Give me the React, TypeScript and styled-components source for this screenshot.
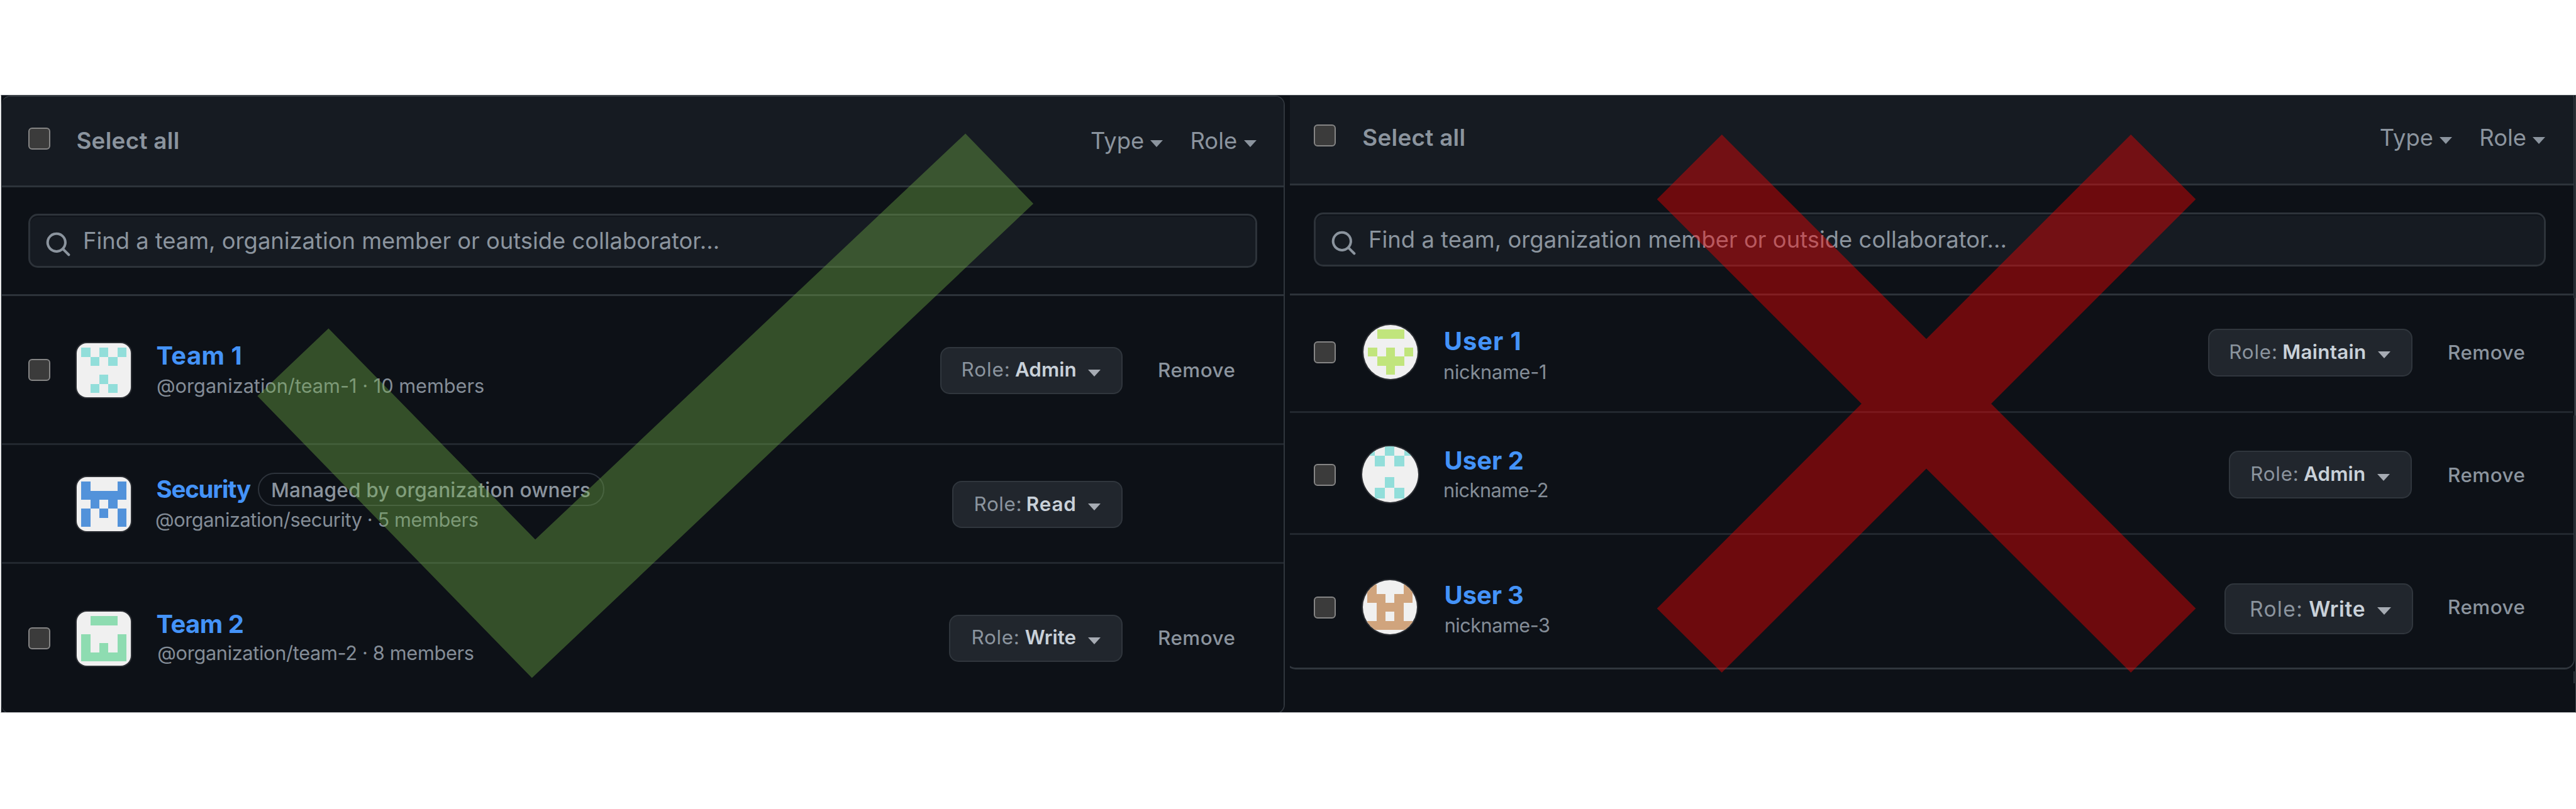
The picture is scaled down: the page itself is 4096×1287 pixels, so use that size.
import React from 'react';
import styled, { createGlobalStyle } from 'styled-components';

const canvas = '#0d1117';
const subtle = '#161b22';
const line = '#2d333a';
const rowLine = '#22282f';
const muted = '#8b949e';

const Global = createGlobalStyle`
  * { box-sizing: border-box; }
  body { margin: 0; background: #fff; font-family: Inter, "Liberation Sans", sans-serif; color: ${muted}; }
`;

const Page = styled.main`
  position: relative;
  width: 4096px;
  height: 1287px;
  padding: 151px 0 0 1px;
  overflow: hidden;
  background: #fff;
`;

const Board = styled.div`
  position: relative;
  display: flex;
  gap: 8px;
  height: 983px;
  overflow: hidden;
  background: ${canvas};
  border: 1px solid;
  border-color: #4c5259 #45494e #b4b6b8 #c4c6c8;
`;

const LeftPanel = styled.section`
  flex: none;
  width: 2041px;
  height: 984px;
  overflow: hidden;
  border: solid #30363d;
  border-width: 2px 2px 2px 1px;
  border-left-color: #1f252c;
  border-radius: 15px;
`;

const RightSide = styled.div`
  position: relative;
  flex: 1;
  overflow: hidden;
`;

const RightPanel = styled.section`
  width: 2050px;
  margin: -10px 0 0 -7px;
  overflow: hidden;
  border: solid #30363d;
  border-width: 2px 2px 3px 2px;
  border-radius: 16px;
`;

/* Short vertical strips where the outer border steps sideways. */
const Sliver = styled.i<{ $top: number; $height: number; $left: number; $fill?: boolean }>`
  position: absolute;
  top: ${p => p.$top}px;
  left: ${p => p.$left}px;
  width: ${p => (p.$fill ? 4 : 2)}px;
  height: ${p => p.$height}px;
  background: ${p => (p.$fill ? canvas : '#30363d')};
  border-right: ${p => (p.$fill ? '2px solid #30363d' : '0')};
`;

const Header = styled.header<{ $height: number; $top: number; $left: number; $right: number }>`
  display: flex;
  align-items: flex-start;
  height: ${p => p.$height}px;
  padding: ${p => p.$top}px ${p => p.$right}px 0 ${p => p.$left}px;
  background: ${subtle};
  border-bottom: 3px solid ${line};
`;

const Check = styled.span<{ $top?: number }>`
  flex: none;
  width: 35px;
  height: 35px;
  margin-top: ${p => p.$top ?? 0}px;
  border: 2px solid #858585;
  border-radius: 6px;
  background: #3b3b3b;
`;

const SelectAll = styled.span<{ $left: number }>`
  flex: 1;
  margin: 3.4px 0 0 ${p => p.$left}px;
  font-size: 36.8px;
  font-weight: 600;
  line-height: 1;
  letter-spacing: 0.3px;
`;

const Menu = styled.span<{ $gap?: number }>`
  display: flex;
  align-items: center;
  margin: 3.4px 0 0 ${p => p.$gap ?? 0}px;
  font-size: 36.4px;
  line-height: 1;
`;

const Caret = styled.i<{ $left: number; $color?: string; $size?: number }>`
  flex: none;
  margin: 8px 0 0 ${p => p.$left}px;
  border: ${p => p.$size ?? 10}px solid transparent;
  border-top: ${p => (p.$size ?? 10) + 1}px solid ${p => p.$color ?? muted};
  border-bottom: 0;
`;

const SearchSection = styled.div<{ $height: number; $pad: string }>`
  height: ${p => p.$height}px;
  padding: ${p => p.$pad};
  background: ${canvas};
  border-bottom: 3px solid ${line};
`;

const SearchBox = styled.div<{ $ls: number }>`
  display: flex;
  align-items: center;
  height: 86px;
  padding-left: 23px;
  border: 3px solid ${line};
  border-radius: 15px;
  background: ${subtle};
  box-shadow: inset 0 2px 0 rgba(1, 4, 9, 0.3);
  font-size: 36.4px;
  line-height: 1;
  letter-spacing: ${p => p.$ls}px;
  white-space: nowrap;
`;

const SearchIcon = styled.svg`
  flex: none;
  width: 43px;
  height: 43px;
  margin: 11px 18px 0 0;
  fill: ${muted};
`;

const Row = styled.div<{ $height: number; $left: number; $last?: boolean }>`
  display: flex;
  align-items: flex-start;
  height: ${p => p.$height}px;
  padding-left: ${p => p.$left}px;
  background: ${canvas};
  border-bottom: ${p => (p.$last ? 0 : 3)}px solid ${rowLine};
`;

const CheckCell = styled.div<{ $width: number }>`
  flex: none;
  display: flex;
  width: ${p => p.$width}px;
`;

const AvatarCell = styled.div<{ $width: number }>`
  flex: none;
  width: ${p => p.$width}px;
`;

const AvatarFrame = styled.div<{ $top: number; $size: number; $round?: boolean; $shift?: number }>`
  width: ${p => p.$size}px;
  height: ${p => p.$size}px;
  margin: ${p => p.$top}px 0 0 ${p => p.$shift ?? 0}px;
  overflow: hidden;
  border-radius: ${p => (p.$round ? '50%' : '16px')};
  background: #f0f0f0;
  box-shadow: 0 0 0 2px #2b2e33;
  svg { display: block; width: 100%; height: 100%; }
`;

const Info = styled.div<{ $top: number }>`
  flex: 1;
  padding-top: ${p => p.$top}px;
  white-space: nowrap;
`;

const NameLine = styled.div<{ $size: number }>`
  display: flex;
  align-items: center;
  height: ${p => p.$size}px;
`;

const Name = styled.span<{ $size: number; $ls: number; $left: number }>`
  margin-left: ${p => p.$left}px;
  color: #4493f8;
  font-size: ${p => p.$size}px;
  font-weight: 700;
  line-height: 1;
  letter-spacing: ${p => p.$ls}px;
`;

const Badge = styled.span`
  flex: none;
  display: flex;
  align-items: center;
  justify-content: center;
  width: 551px;
  height: 53px;
  margin: 2px 0 0 11.5px;
  padding-top: 1px;
  border: 2px solid #2d333b;
  border-radius: 27px;
  font-size: 31.6px;
  font-weight: 500;
  line-height: 1;
  letter-spacing: 0.17px;
`;

const Sub = styled.div<{ $top: number; $left: number; $ls: number }>`
  margin: ${p => p.$top}px 0 0 ${p => p.$left}px;
  font-size: 30.7px;
  line-height: 1;
  letter-spacing: ${p => p.$ls}px;
  color: #848d97;
`;

const RoleButton = styled.div<{ $top: number; $width: number; $height: number; $size: number; $shift: number }>`
  flex: none;
  display: flex;
  align-items: center;
  justify-content: flex-end;
  width: ${p => p.$width}px;
  height: ${p => p.$height}px;
  margin: ${p => p.$top}px ${p => -p.$shift}px 0 0;
  padding-right: 33px;
  border: 2px solid #30363d;
  border-radius: 15px;
  background: #21262d;
  font-size: ${p => p.$size}px;
  line-height: 1;
`;

const RoleKey = styled.span<{ $ls: number; $gap: number }>`
  letter-spacing: ${p => p.$ls}px;
  margin-right: ${p => p.$gap}px;
`;

const RoleValue = styled.span<{ $ls: number }>`
  color: #c9d1d9;
  font-weight: 600;
  letter-spacing: ${p => p.$ls}px;
`;

const Trailing = styled.div`
  flex: none;
  width: 255.8px;
  padding-left: 55.8px;
`;

const Remove = styled.span<{ $top: number; $ls: number }>`
  display: block;
  margin-top: ${p => p.$top}px;
  font-size: 31.4px;
  font-weight: 500;
  line-height: 1;
  letter-spacing: ${p => p.$ls}px;
`;

const Overlay = styled.svg`
  position: absolute;
  top: 0;
  left: 0;
  width: 4096px;
  height: 1287px;
  pointer-events: none;
`;

interface Member {
  height: number;
  check?: number;
  avatar: { top: number; size: number; color: string; rows: string[]; shift?: number; box?: string };
  top: number;
  name: string;
  size?: number;
  nameLs: number;
  nameLeft?: number;
  badge?: string;
  sub: string;
  subTop: number;
  subLeft: number;
  subLs: number;
  role: string;
  btn: { top: number; w: number; h: number; size?: number; key: number; val: number; gap?: number; caret?: number; shift?: number };
  remove?: number;
}

const teams: Member[] = [
  {
    height: 237, check: 100,
    avatar: { top: 75, size: 86, color: '#92deda', rows: ['10101', '01010', '00000', '00100', '01010'] },
    top: 74.5, name: 'Team 1', nameLs: 0.4,
    sub: '@organization/team-1 · 10 members', subTop: 13.3, subLeft: 0.6, subLs: 0,
    role: 'Admin', btn: { top: 80.5, w: 290, h: 75, key: 0.9, val: 0 }, remove: 103,
  },
  {
    height: 189,
    avatar: { top: 51, size: 86, color: '#5292da', rows: ['10001', '11111', '01010', '10101', '10001'] },
    top: 50.6, name: 'Security', size: 38.5, nameLs: -1.2, badge: 'Managed by organization owners',
    sub: '@organization/security · 5 members', subTop: 14.8, subLeft: -1.5, subLs: -0.38,
    role: 'Read', btn: { top: 57, w: 271, h: 74.5, key: 0.65, val: 0.8, gap: 6.6 },
  },
  {
    height: 239, check: 101,
    avatar: { top: 75.5, size: 86, color: '#8edcb1', rows: ['01110', '00000', '10001', '10101', '11111'] },
    top: 75.5, name: 'Team 2', nameLs: -0.55,
    sub: '@organization/team-2 · 8 members', subTop: 11.9, subLeft: 1.9, subLs: -0.32,
    role: 'Write', btn: { top: 80.6, w: 276, h: 75, key: 0.65, val: 0, gap: 8.4, caret: 19.2 }, remove: 103,
  },
];

const users: Member[] = [
  {
    height: 187, check: 73,
    avatar: { top: 47, size: 86, color: '#c1e57c', rows: ['01110', '00000', '10101', '01110', '00100'] },
    top: 53.4, name: 'User 1', nameLs: 0.9, nameLeft: -0.2,
    sub: 'nickname-1', subTop: 14.1, subLeft: -1, subLs: -0.23,
    role: 'Maintain', btn: { top: 52.7, w: 325, h: 76, key: 0.8, val: 0.3 }, remove: 75.7,
  },
  {
    height: 194, check: 81,
    avatar: { top: 53.4, size: 89, color: '#92deda', rows: ['10101', '01010', '00000', '00100', '01010'], shift: -2.5, box: '16 43 398 368' },
    top: 55.9, name: 'User 2', nameLs: 0, nameLeft: 0.6,
    sub: 'nickname-2', subTop: 12.6, subLeft: -1, subLs: -0.5,
    role: 'Admin', btn: { top: 60.1, w: 291, h: 76, key: 0.8, val: 0.1, shift: -1.4 }, remove: 83.7,
  },
  {
    height: 211, check: 97.7,
    avatar: { top: 72, size: 86, color: '#d0a47d', rows: ['10001', '11011', '01110', '01010', '11111'], shift: -1 },
    top: 75.5, name: 'User 3', nameLs: -0.15, nameLeft: 0.6,
    sub: 'nickname-3', subTop: 13.9, subLeft: 0.7, subLs: -0.5,
    role: 'Write', btn: { top: 76.9, w: 300, h: 81, size: 33.6, key: 1.3, val: 0.6, gap: 9, caret: 19, shift: 0.9 }, remove: 100.3,
  },
];

function Identicon({ rows, color, box = '0 0 420 420' }: { rows: string[]; color: string; box?: string }) {
  return (
    <svg viewBox={box} preserveAspectRatio="none" fill={color} shapeRendering="crispEdges">
      {rows.flatMap((r, y) =>
        r.split('').map((c, x) =>
          c === '1' ? <rect key={`${x}-${y}`} x={35 + x * 70} y={35 + y * 70} width="70" height="70" /> : null,
        ),
      )}
    </svg>
  );
}

function Search({ ls }: { ls: number }) {
  return (
    <SearchBox $ls={ls}>
      <SearchIcon viewBox="0 0 16 16">
        <path fillRule="evenodd" d="M11.5 7a4.499 4.499 0 11-8.998 0A4.499 4.499 0 0111.5 7zm-.82 4.74a6 6 0 111.06-1.06l3.04 3.04a.75.75 0 11-1.06 1.06l-3.04-3.04z" />
      </SearchIcon>
      Find a team, organization member or outside collaborator...
    </SearchBox>
  );
}

function Menus() {
  return (
    <>
      <Menu>Type<Caret $left={10.3} /></Menu>
      <Menu $gap={43}>Role<Caret $left={10.3} /></Menu>
    </>
  );
}

function MemberRow({ m, left, checkW, avatarW, round, last }: { m: Member; left: number; checkW: number; avatarW: number; round?: boolean; last?: boolean }) {
  const size = m.size ?? 40;
  return (
    <Row $height={m.height} $left={left} $last={last}>
      <CheckCell $width={checkW}>{m.check !== undefined && <Check $top={m.check} />}</CheckCell>
      <AvatarCell $width={avatarW}>
        <AvatarFrame $top={m.avatar.top} $size={m.avatar.size} $round={round} $shift={m.avatar.shift}>
          <Identicon rows={m.avatar.rows} color={m.avatar.color} box={m.avatar.box} />
        </AvatarFrame>
      </AvatarCell>
      <Info $top={m.top}>
        <NameLine $size={size}>
          <Name $size={size} $ls={m.nameLs} $left={m.nameLeft ?? 0}>{m.name}</Name>
          {m.badge && <Badge>{m.badge}</Badge>}
        </NameLine>
        <Sub $top={m.subTop} $left={m.subLeft} $ls={m.subLs}>{m.sub}</Sub>
      </Info>
      <RoleButton $top={m.btn.top} $width={m.btn.w} $height={m.btn.h} $size={m.btn.size ?? 31.4} $shift={m.btn.shift ?? 0}>
        <RoleKey $ls={m.btn.key} $gap={m.btn.gap ?? 7.4}>Role:</RoleKey>
        <RoleValue $ls={m.btn.val}>{m.role}</RoleValue>
        <Caret $left={m.btn.caret ?? 18.6} $color="#a6abb3" $size={m.btn.size ? 11 : 10} />
      </RoleButton>
      <Trailing>{m.remove !== undefined && <Remove $top={m.remove} $ls={0.5}>Remove</Remove>}</Trailing>
    </Row>
  );
}

export default function App() {
  return (
    <Page>
      <Global />
      <Board>
        <LeftPanel>
          <Header $height={144} $top={49} $left={42} $right={43.5}>
            <Check />
            <SelectAll $left={41.4}>Select all</SelectAll>
            <Menus />
          </Header>
          <SearchSection $height={173} $pad="42px 42.5px 0 42px"><Search ls={-0.03} /></SearchSection>
          {teams.map((m, i) => (
            <MemberRow key={m.name} m={m} left={42} checkW={77} avatarW={126.4} last={i === 2} />
          ))}
        </LeftPanel>
        <RightSide>
          <RightPanel>
            <Header $height={151} $top={54} $left={43} $right={44.7}>
              <Check />
              <SelectAll $left={42.3}>Select all</SelectAll>
              <Menus />
            </Header>
            <SearchSection $height={175} $pad="43px 44px 0 43px"><Search ls={0.02} /></SearchSection>
            {users.map((m, i) => (
              <MemberRow key={m.name} m={m} left={43} checkW={79} avatarW={128} round last={i === 2} />
            ))}
          </RightPanel>
          <Sliver $fill $top={322} $height={187} $left={2040} />
          <Sliver $top={916} $height={19} $left={2041} />
        </RightSide>
      </Board>
      <Overlay viewBox="0 0 4096 1287">
        <polygon fill="#70ad47" fillOpacity="0.4" points="1535.1,212.4 1643.1,324.1 845.8,1078.6 409.3,630 522.4,522.4 851.1,858.3" />
        <polygon
          fill="#ff0000"
          fillOpacity="0.4"
          points="2737.8,214.1 3063,539.2 3388.2,214.1 3491.4,316.9 3166.1,642.2 3491.4,968 3388.2,1070.1 3063,745.4 2737.8,1070.1 2634.7,968 2959.9,642.2 2634.7,316.9"
        />
      </Overlay>
    </Page>
  );
}
